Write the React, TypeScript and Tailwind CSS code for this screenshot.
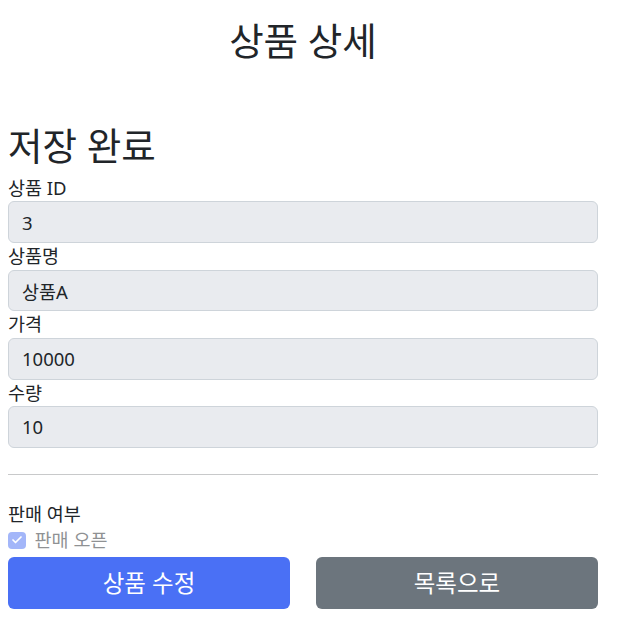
import { Check } from "lucide-react";

const fields = [
  { label: "상품 ID", value: "3" },
  { label: "상품명", value: "상품A" },
  { label: "가격", value: "10000" },
  { label: "수량", value: "10" },
];

export default function App() {
  return (
    <div className="min-h-screen bg-white font-['Noto_Sans','Noto_Sans_CJK_KR',sans-serif] text-[18.5px] text-[#212529]">
      <div className="ml-2 w-[590px] pt-[20px]">
        <h2 className="text-center text-[37.5px] font-normal leading-[42px]">상품 상세</h2>

        <h2 className="mt-[63px] text-[37.5px] font-normal leading-[42px]">저장 완료</h2>

        <form className="mt-[8px]">
          {fields.map((f) => (
            <div key={f.label}>
              <label className="block leading-[26.4px]">{f.label}</label>
              <input
                readOnly
                value={f.value}
                className="block h-[41.8px] w-full rounded-[6px] border border-[#ced4da] bg-[#e9ebef] px-[13px] leading-[26.4px] text-[#212529] outline-none"
              />
            </div>
          ))}

          <hr className="my-[26px] border-t border-[#c8c9ca]" />

          <div className="leading-[26.4px]">판매 여부</div>
          <div className="flex h-[26.4px] items-center opacity-50">
            <span className="flex h-[17.6px] w-[17.6px] items-center justify-center rounded-[4px] bg-[#4a70f5]">
              <Check className="h-[12px] w-[12px] text-white" strokeWidth={3.5} />
            </span>
            <span className="ml-[9px] leading-[26.4px]">판매 오픈</span>
          </div>

          <div className="mt-[3px] grid grid-cols-2 gap-[26px]">
            <button
              type="button"
              className="h-[52.8px] rounded-[6px] bg-[#4a70f5] text-[23.5px] leading-[33px] text-white"
            >
              상품 수정
            </button>
            <button
              type="button"
              className="h-[52.8px] rounded-[6px] bg-[#6c757d] text-[23.5px] leading-[33px] text-white"
            >
              목록으로
            </button>
          </div>
        </form>
      </div>
    </div>
  );
}
